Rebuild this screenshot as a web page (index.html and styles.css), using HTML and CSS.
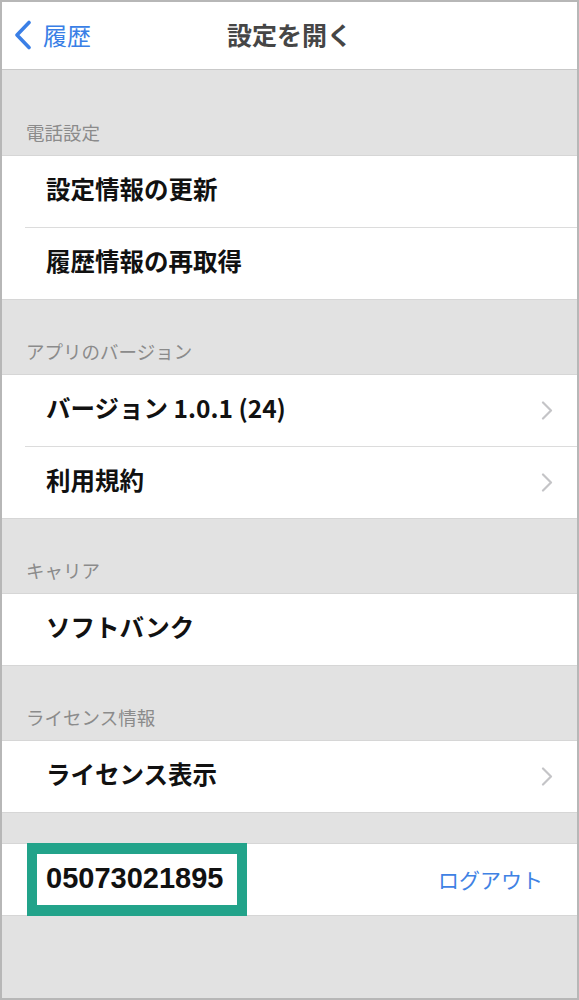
FILE: index.html
```html
<!DOCTYPE html>
<html lang="ja">
<head>
  <meta charset="UTF-8" />
  <meta name="viewport" content="width=device-width, initial-scale=1.0" />
  <title>設定を開く</title>
  <link rel="stylesheet" href="styles.css">
</head>
<body>
  <div class="screen">
    <header class="nav">
      <a class="nav-back" href="#">
        <svg class="back-icon" width="18" height="30" viewBox="0 0 18 30">
          <polyline points="15,2.5 3,15 15,27.5" fill="none" stroke="#3a7fe6" stroke-width="3.6" stroke-linecap="round" stroke-linejoin="round" />
        </svg>
        <span>履歴</span>
      </a>
      <div class="nav-title">設定を開く</div>
    </header>

    <div class="section-label first">電話設定</div>
    <div class="group">
      <div class="row"><span class="row-text">設定情報の更新</span></div>
      <div class="row"><span class="row-text">履歴情報の再取得</span></div>
    </div>

    <div class="section-label">アプリのバージョン</div>
    <div class="group">
      <div class="row">
        <span class="row-text">バージョン 1.0.1 (24)</span>
        <svg class="chevron" width="12" height="19" viewBox="0 0 12 19">
          <polyline points="2,1.5 10,9.5 2,17.5" fill="none" stroke="#c4c4c7" stroke-width="2.2" stroke-linecap="round" stroke-linejoin="round" />
        </svg>
      </div>
      <div class="row">
        <span class="row-text">利用規約</span>
        <svg class="chevron" width="12" height="19" viewBox="0 0 12 19">
          <polyline points="2,1.5 10,9.5 2,17.5" fill="none" stroke="#c4c4c7" stroke-width="2.2" stroke-linecap="round" stroke-linejoin="round" />
        </svg>
      </div>
    </div>

    <div class="section-label">キャリア</div>
    <div class="group">
      <div class="row"><span class="row-text">ソフトバンク</span></div>
    </div>

    <div class="section-label">ライセンス情報</div>
    <div class="group">
      <div class="row">
        <span class="row-text">ライセンス表示</span>
        <svg class="chevron" width="12" height="19" viewBox="0 0 12 19">
          <polyline points="2,1.5 10,9.5 2,17.5" fill="none" stroke="#c4c4c7" stroke-width="2.2" stroke-linecap="round" stroke-linejoin="round" />
        </svg>
      </div>
    </div>

    <div class="account-row">
      <div class="number-box">05073021895</div>
      <a class="logout" href="#">ログアウト</a>
    </div>
  </div>
</body>
</html>
```

FILE: styles.css
```css
body {
  margin: 0;
  font-family: "Noto Sans CJK JP", "Noto Sans", sans-serif;
  background: #fff;
}
.screen {
  width: 579px;
  height: 1000px;
  box-sizing: border-box;
  border: 2px solid #b7b7b7;
  background: #e2e2e2;
  overflow: hidden;
}
.nav {
  position: relative;
  height: 67px;
  background: #fff;
  border-bottom: 1px solid #c9c9c9;
  display: flex;
  align-items: center;
  justify-content: center;
}
.nav-back {
  position: absolute;
  left: 12px;
  top: 0;
  bottom: 2px;
  display: flex;
  align-items: center;
  gap: 11px;
  color: #3a7fe6;
  text-decoration: none;
  font-size: 24px;
  line-height: 1;
}
.nav-title {
  font-size: 25px;
  font-weight: 700;
  color: #464646;
  line-height: 1;
  margin-bottom: 2px;
}
.section-label {
  padding: 42px 0 14px 24px;
  font-size: 18.5px;
  line-height: 18px;
  color: #8b8b8b;
}
.section-label.first {
  padding-top: 53px;
}
.group {
  background: #fff;
  border-top: 1px solid #d6d6d6;
  border-bottom: 1px solid #d6d6d6;
}
.row {
  height: 71px;
  display: flex;
  align-items: center;
  justify-content: space-between;
  padding: 0 24px 0 44px;
}
.row + .row {
  border-top: 1px solid #dcdcdc;
  margin-left: 23px;
  padding-left: 21px;
}
.row-text {
  font-size: 24.5px;
  font-weight: 700;
  color: #111;
  line-height: 1;
  margin-bottom: 4px;
}
.chevron {
  display: block;
}
.account-row {
  margin-top: 30px;
  height: 73px;
  background: #fff;
  box-shadow: inset 0 1px #d6d6d6, inset 0 -1px #d6d6d6;
  display: flex;
  align-items: center;
  justify-content: space-between;
  padding: 0 34px 0 25px;
}
.number-box {
  box-sizing: border-box;
  width: 220px;
  height: 73px;
  border: 10px solid #22a38a;
  border-top-width: 11px;
  border-bottom-width: 11px;
  background: #fff;
  display: flex;
  align-items: center;
  padding: 0 0 2px 9px;
  font-family: "Liberation Sans", Arial, sans-serif;
  font-size: 29px;
  font-weight: 700;
  color: #111;
}
.logout {
  color: #3f82e4;
  font-size: 21px;
  text-decoration: none;
  line-height: 1;
}
```
